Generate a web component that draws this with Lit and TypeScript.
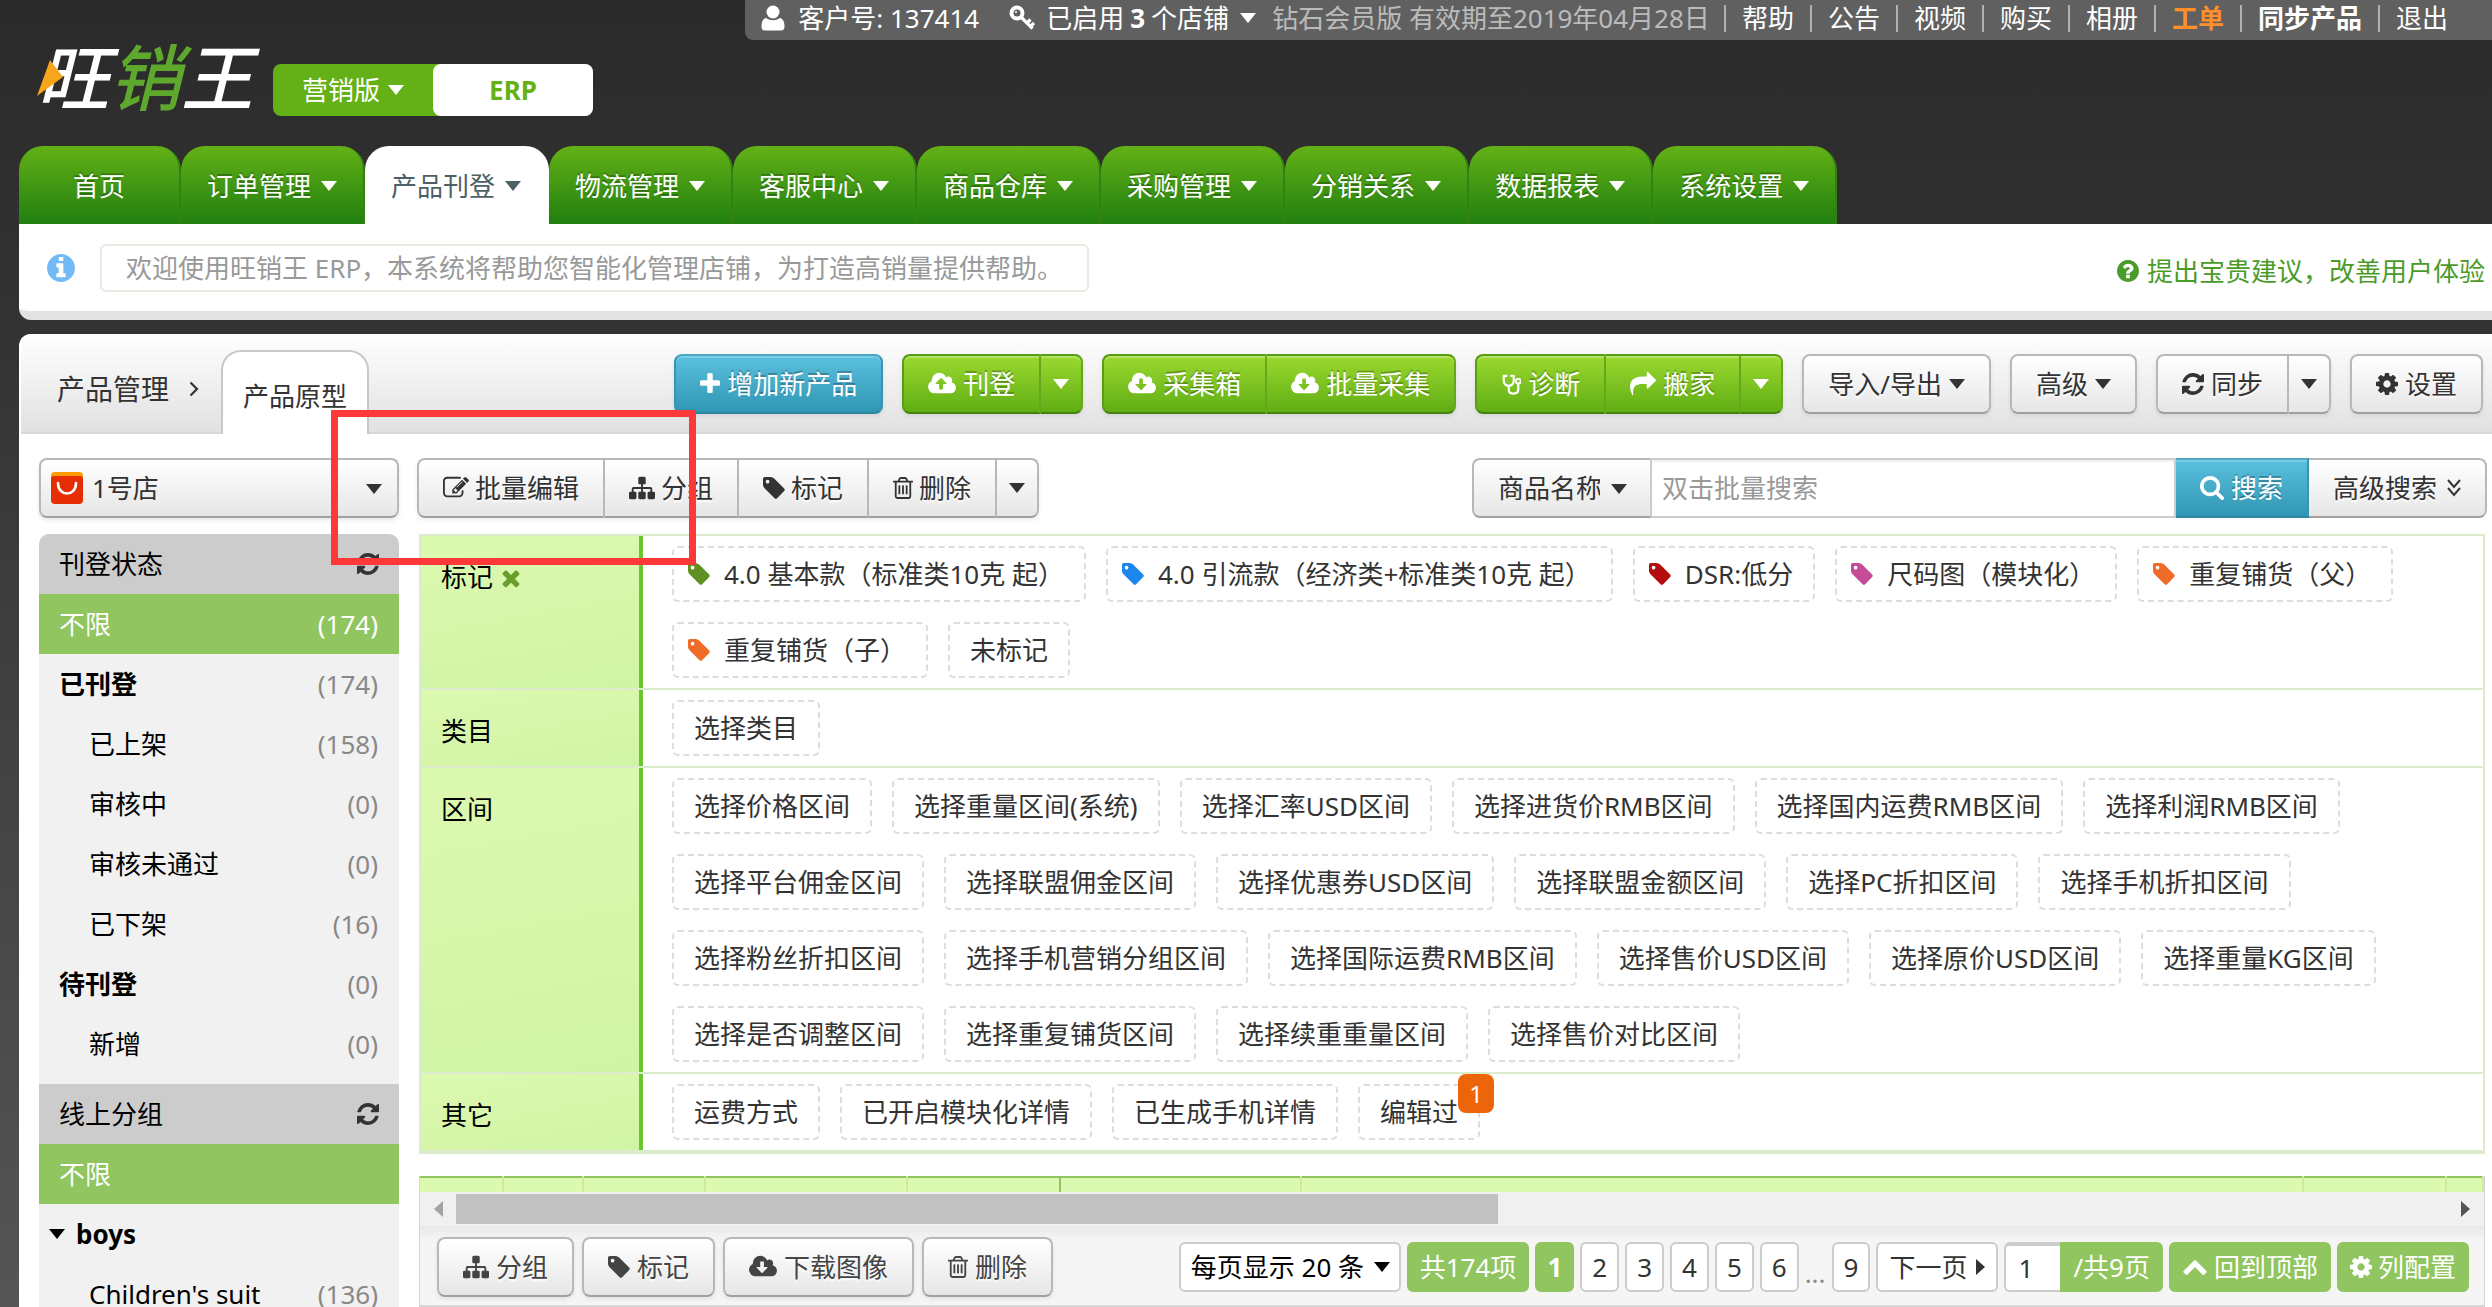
import { LitElement, html, css, svg, nothing, type TemplateResult, type SVGTemplateResult } from "lit";
import { customElement } from "lit/decorators.js";
import { classMap } from "lit/directives/class-map.js";
import { styleMap } from "lit/directives/style-map.js";

type Glyph = { box: string; w: number; h: number; body: SVGTemplateResult };

const CLOUD =
  "m640 288q0 159-112.5 271.5t-271.5 112.5h-1088q-185 0-316.5-131.5t-131.5-316.5q0-130 70-240t188-165q-2-30-2-43 0-212 150-362t362-150q156 0 285.5 87t188.5 231q71-62 166-62 106 0 181 75t75 181q0 76-41 138 130 31 213.5 135.5t83.5 238.5z";

const GLYPHS: Record<string, Glyph> = {
  tag: {
    box: "128 0 1536 1792", w: 22, h: 26,
    body: svg`<path d="M576 448q0-53-37.5-90.5t-90.5-37.5-90.5 37.5-37.5 90.5 37.5 90.5 90.5 37.5 90.5-37.5 37.5-90.5zm1067 576q0 53-37 90l-491 492q-39 37-91 37-53 0-90-37l-715-716q-38-37-64.5-101t-26.5-117v-416q0-52 38-90t90-38h416q53 0 117 26.5t102 64.5l715 714q37 39 37 91z"/>`,
  },
  trash: {
    box: "192 0 1408 1792", w: 20, h: 26,
    body: svg`<path d="M704 736v576q0 14-9 23t-23 9h-64q-14 0-23-9t-9-23v-576q0-14 9-23t23-9h64q14 0 23 9t9 23zm256 0v576q0 14-9 23t-23 9h-64q-14 0-23-9t-9-23v-576q0-14 9-23t23-9h64q14 0 23 9t9 23zm256 0v576q0 14-9 23t-23 9h-64q-14 0-23-9t-9-23v-576q0-14 9-23t23-9h64q14 0 23 9t9 23zm128 724v-948h-896v948q0 22 7 40.5t14.5 27 10.5 8.5h832q3 0 10.5-8.5t14.5-27 7-40.5zm-672-1076h448l-48-117q-7-9-17-11h-317q-10 2-17 11zm928 32v64q0 14-9 23t-23 9h-96v948q0 83-47 143.5t-113 60.5h-832q-66 0-113-58.5t-47-141.5v-952h-96q-14 0-23-9t-9-23v-64q0-14 9-23t23-9h309l70-167q15-37 54-63t79-26h320q40 0 79 26t54 63l70 167h309q14 0 23 9t9 23z"/>`,
  },
  refresh: {
    box: "128 0 1536 1792", w: 22, h: 26,
    body: svg`<path d="M1639 1056q0 5-1 7-64 268-268 434.5t-478 166.5q-146 0-282.5-55t-243.5-157l-129 129q-19 19-45 19t-45-19-19-45v-448q0-26 19-45t45-19h448q26 0 45 19t19 45-19 45l-137 137q71 66 161 102t187 36q134 0 250-65t186-179q11-17 53-117 8-23 30-23h192q13 0 22.5 9.5t9.5 22.5zm25-800v448q0 26-19 45t-45 19h-448q-26 0-45-19t-19-45 19-45l138-138q-148-137-349-137-134 0-250 65t-186 179q-11 17-53 117-8 23-30 23h-199q-13 0-22.5-9.5t-9.5-22.5v-7q65-268 270-434.5t480-166.5q146 0 284 55.5t245 156.5l130-129q19-19 45-19t45 19 19 45z"/>`,
  },
  cog: {
    box: "128 0 1536 1792", w: 22, h: 26,
    body: svg`<path d="M1152 896q0-106-75-181t-181-75-181 75-75 181 75 181 181 75 181-75 75-181zm512-109v222q0 12-8 23t-20 13l-185 28q-19 54-39 91 35 50 107 138 10 12 10 25t-9 23q-27 37-99 108t-94 71q-12 0-26-9l-138-108q-44 23-91 38-16 136-29 186-7 28-36 28h-222q-14 0-24.5-8.5t-11.5-21.5l-28-184q-49-16-90-37l-141 107q-10 9-25 9-14 0-25-11-126-114-165-168-7-10-7-23 0-12 8-23 15-21 51-66.5t54-70.5q-27-50-41-99l-183-27q-13-2-21-12.5t-8-23.5v-222q0-12 8-23t19-13l186-28q14-46 39-92-40-57-107-138-10-12-10-24 0-10 9-23 26-36 98.5-107.5t94.5-71.5q13 0 26 10l138 107q44-23 91-38 16-136 29-186 7-28 36-28h222q14 0 24.5 8.5t11.5 21.5l28 184q49 16 90 37l142-107q9-9 24-9 13 0 25 10 129 119 165 170 7 8 7 22 0 12-8 23-15 21-51 66.5t-54 70.5q26 50 41 98l183 28q13 2 21 12.5t8 23.5z"/>`,
  },
  plus: {
    box: "192 0 1408 1792", w: 20, h: 26,
    body: svg`<path d="M1600 736v192q0 40-28 68t-68 28h-416v416q0 40-28 68t-68 28h-192q-40 0-68-28t-28-68v-416h-416q-40 0-68-28t-28-68v-192q0-40 28-68t68-28h416v-416q0-40 28-68t68-28h192q40 0 68 28t28 68v416h416q40 0 68 28t28 68z"/>`,
  },
  share: {
    box: "0 0 1792 1792", w: 26, h: 26,
    body: svg`<path d="M1792 640q0 26-19 45l-512 512q-19 19-45 19t-45-19-19-45v-256h-224q-98 0-175.5 6t-154 21.5-133 42.5-105.5 69.5-80 101-48.5 138.5-17.5 181q0 55 5 123 0 6 2.5 23.5t2.5 26.5q0 15-8.5 25t-23.5 10q-16 0-28-17-7-9-13-22t-13.5-30-10.5-24q-127-285-127-451 0-199 53-333 162-403 875-403h224v-256q0-26 19-45t45-19 45 19l512 512q19 19 19 45z"/>`,
  },
  search: {
    box: "64 64 1664 1792", w: 24, h: 26,
    body: svg`<path d="M1216 832q0-185-131.5-316.5t-316.5-131.5-316.5 131.5-131.5 316.5 131.5 316.5 316.5 131.5 316.5-131.5 131.5-316.5zm512 832q0 52-38 90t-90 38q-54 0-90-38l-343-342q-179 124-399 124-143 0-273.5-55.5t-225-150-150-225-55.5-273.5 55.5-273.5 150-225 225-150 273.5-55.5 273.5 55.5 225 150 150 225 55.5 273.5q0 220-124 399l343 343q37 37 37 90z"/>`,
  },
  edit: {
    box: "0 0 1792 1792", w: 26, h: 26,
    body: svg`<path d="M888 1184l116-116-152-152-116 116v56h96v96h56zm440-720q-16-16-33 1l-350 350q-17 17-1 33t33-1l350-350q17-17 1-33zm80 594v190q0 119-84.5 203.5t-203.5 84.5h-832q-119 0-203.5-84.5t-84.5-203.5v-832q0-119 84.5-203.5t203.5-84.5h832q63 0 117 25 15 7 18 23 3 17-9 29l-49 49q-14 14-32 8-23-6-45-6h-832q-66 0-113 47t-47 113v832q0 66 47 113t113 47h832q66 0 113-47t47-113v-126q0-13 9-22l64-64q15-15 35-7t20 29zm-96-738l288 288-672 672h-288v-288zm444 132l-92 92-288-288 92-92q28-28 68-28t68 28l152 152q28 28 28 68t-28 68z"/>`,
  },
  sitemap: {
    box: "0 0 1792 1792", w: 26, h: 26,
    body: svg`<path d="M1792 1248v320q0 40-28 68t-68 28h-320q-40 0-68-28t-28-68v-320q0-40 28-68t68-28h96v-192h-512v192h96q40 0 68 28t28 68v320q0 40-28 68t-68 28h-320q-40 0-68-28t-28-68v-320q0-40 28-68t68-28h96v-192h-512v192h96q40 0 68 28t28 68v320q0 40-28 68t-68 28h-320q-40 0-68-28t-28-68v-320q0-40 28-68t68-28h96v-192q0-52 38-90t90-38h512v-192h-96q-40 0-68-28t-28-68v-320q0-40 28-68t68-28h320q40 0 68 28t28 68v320q0 40-28 68t-68 28h-96v192h512q52 0 90 38t38 90v192h96q40 0 68 28t28 68z"/>`,
  },
  upload: {
    box: "0 0 1920 1792", w: 28, h: 26,
    body: svg`<path d="M1280 864q0-14-9-23l-352-352q-9-9-23-9t-23 9l-351 351q-10 12-10 24 0 14 9 23t23 9h224v352q0 13 9.5 22.5t22.5 9.5h192q13 0 22.5-9.5t9.5-22.5v-352h224q13 0 22.5-9.5t9.5-22.5z${CLOUD}"/>`,
  },
  download: {
    box: "0 0 1920 1792", w: 28, h: 26,
    body: svg`<path d="M1280 928q0-14-9-23t-23-9h-224v-352q0-13-9.5-22.5t-22.5-9.5h-192q-13 0-22.5 9.5t-9.5 22.5v352h-224q-13 0-22.5 9.5t-9.5 22.5q0 14 9 23l352 352q9 9 23 9t23-9l351-351q10-12 10-24zm0-64${CLOUD}"/>`,
  },
  steth: {
    box: "0 0 22 26", w: 20, h: 26,
    body: svg`<path d="M3 4H6M11 4H14M3 4V9C3 13 5.500 15 8.500 15S14 13 14 9V4M8.500 15V19C8.500 22 10.500 23.500 13.500 23.500S19 22 19 19V12.500" fill="none" stroke="currentColor" stroke-width="2.400" stroke-linecap="round" stroke-linejoin="round"/><circle cx="19" cy="10" r="2.600" fill="none" stroke="currentColor" stroke-width="2"/>`,
  },
  times: {
    box: "192 0 1408 1792", w: 20, h: 26,
    body: svg`<path d="M1490 1322q0 40-28 68l-136 136q-28 28-68 28t-68-28l-294-294-294 294q-28 28-68 28t-68-28l-136-136q-28-28-28-68t28-68l294-294-294-294q-28-28-28-68t28-68l136-136q28-28 68-28t68 28l294 294 294-294q28-28 68-28t68 28l136 136q28 28 28 68t-28 68l-294 294 294 294q28 28 28 68z"/>`,
  },
  up: {
    box: "0 64 1792 1792", w: 26, h: 26,
    body: svg`<path d="M1683 1331l-166 165q-19 19-45 19t-45-19l-531-531-531 531q-19 19-45 19t-45-19l-166-165q-19-19-19-45.500t19-45.500l742-741q19-19 45-19t45 19l742 741q19 19 19 45.500t-19 45.500z"/>`,
  },
  question: {
    box: "128 128 1536 1536", w: 22, h: 22,
    body: svg`<path d="M1024 1376v-192q0-14-9-23t-23-9h-192q-14 0-23 9t-9 23v192q0 14 9 23t23 9h192q14 0 23-9t9-23zm256-672q0-88-55.500-163t-138.500-116-170-41q-243 0-371 213-15 24 8 42l132 100q7 6 19 6 16 0 25-12 53-68 86-92 34-24 86-24 48 0 85.500 26t37.500 59q0 38-20 61t-68 45q-63 28-115.500 86.500t-52.500 125.500v36q0 14 9 23t23 9h192q14 0 23-9t9-23q0-19 21.500-49.500t54.500-49.500q32-18 49-28.500t46-35 44.500-48 28-60.500 12.500-81zm384 192q0 209-103 385.500t-279.500 279.500-385.500 103-385.500-103-279.500-279.500-103-385.500 103-385.500 279.500-279.500 385.500-103 385.500 103 279.500 279.500 103 385.500z"/>`,
  },
  info: {
    box: "128 128 1536 1536", w: 28, h: 28,
    body: svg`<path d="M1152 1376v-160q0-14-9-23t-23-9h-96v-512q0-14-9-23t-23-9h-320q-14 0-23 9t-9 23v160q0 14 9 23t23 9h96v320h-96q-14 0-23 9t-9 23v160q0 14 9 23t23 9h448q14 0 23-9t9-23zm-128-896v-160q0-14-9-23t-23-9h-192q-14 0-23 9t-9 23v160q0 14 9 23t23 9h192q14 0 23-9t9-23zm640 416q0 209-103 385.500t-279.500 279.500-385.500 103-385.500-103-279.500-279.500-103-385.500 103-385.500 279.500-279.500 385.500-103 385.500 103 279.500 279.500 103 385.500z"/>`,
  },
  user: {
    box: "0 0 24 26", w: 24, h: 26,
    body: svg`<circle cx="12" cy="7" r="6.500"/><path d="M5 13Q12 17.500 19 13C22 13.500 23.500 17 23.500 21.500Q23.500 25.500 20 25.500H4Q.5 25.500.5 21.500C.5 17 2 13.500 5 13Z"/>`,
  },
  key: {
    box: "0 0 26 26", w: 26, h: 26,
    body: svg`<g fill="none" stroke="currentColor"><circle cx="8" cy="8" r="5.500" stroke-width="4"/><path d="M12 12L23.500 23.500M18 18L21.500 14.500M21.500 21.500L25 18" stroke-width="3.200"/></g><circle cx="7" cy="7" r="1"/>`,
  },
  caret: { box: "0 0 16 10", w: 16, h: 10, body: svg`<path d="M0 0H16L8 10Z"/>` },
  caretSide: { box: "0 0 9 16", w: 9, h: 16, body: svg`<path d="M0 0V16L9 8Z"/>` },
  caretBack: { box: "0 0 9 16", w: 9, h: 16, body: svg`<path d="M9 0V16L0 8Z"/>` },
  angle: {
    box: "0 0 10 16", w: 10, h: 16,
    body: svg`<path d="M1.500 1.500L8 8L1.500 14.500" fill="none" stroke="currentColor" stroke-width="2.200"/>`,
  },
  angles: {
    box: "0 0 14 18", w: 14, h: 18,
    body: svg`<path d="M1 1L7 8L13 1M1 9L7 16L13 9" fill="none" stroke="currentColor" stroke-width="2"/>`,
  },
  arrowhead: { box: "0 0 26 36", w: 26, h: 36, body: svg`<path d="M13 0L26 17L0 36Z"/>` },
  shop: {
    box: "0 0 32 32", w: 32, h: 32,
    body: svg`<rect width="32" height="24" rx="4" fill="#ff9a00"/><path d="M0 7Q0 4 3 4H29Q32 4 32 7V28Q32 32 28 32H4Q0 32 0 28Z" fill="#e62e04"/><path d="M7 11C7 25 25 25 25 11" fill="none" stroke="#fff" stroke-width="2.600" stroke-linecap="round"/>`,
  },
};

const icon = (name: string, color?: string): TemplateResult => {
  const g = GLYPHS[name];
  return html`<svg class="icon" viewBox=${g.box} width=${g.w} height=${g.h} fill="currentColor" aria-hidden="true"
    style=${color ? styleMap({ color }) : nothing}>${g.body}</svg>`;
};

type Item = { icon?: string; text?: string; tail?: string; label?: string };

const TOP_LINKS = ["帮助", "公告", "视频", "购买", "相册", "工单", "同步产品", "退出"];
const NAV = ["首页", "订单管理", "产品刊登", "物流管理", "客服中心", "商品仓库", "采购管理", "分销关系", "数据报表", "系统设置"];

const ACTIONS: { tone: string; items: Item[] }[] = [
  { tone: "blue", items: [{ icon: "plus", text: "增加新产品" }] },
  { tone: "green", items: [{ icon: "upload", text: "刊登" }, { tail: "caret", label: "更多刊登操作" }] },
  { tone: "green", items: [{ icon: "download", text: "采集箱" }, { icon: "download", text: "批量采集" }] },
  { tone: "green", items: [{ icon: "steth", text: "诊断" }, { icon: "share", text: "搬家" }, { tail: "caret", label: "更多搬家操作" }] },
  { tone: "plain", items: [{ text: "导入/导出", tail: "caret" }] },
  { tone: "plain", items: [{ text: "高级", tail: "caret" }] },
  { tone: "plain", items: [{ icon: "refresh", text: "同步" }, { tail: "caret", label: "更多同步操作" }] },
  { tone: "plain", items: [{ icon: "cog", text: "设置" }] },
];

const BATCH: Item[] = [
  { icon: "edit", text: "批量编辑" },
  { icon: "sitemap", text: "分组" },
  { icon: "tag", text: "标记" },
  { icon: "trash", text: "删除" },
  { tail: "caret", label: "更多批量操作" },
];

const FOOT: Item[] = [
  { icon: "sitemap", text: "分组" },
  { icon: "tag", text: "标记" },
  { icon: "download", text: "下载图像" },
  { icon: "trash", text: "删除" },
];

const STATES: { text: string; count: string; kind: string }[] = [
  { text: "不限", count: "(174)", kind: "on" },
  { text: "已刊登", count: "(174)", kind: "strong" },
  { text: "已上架", count: "(158)", kind: "child" },
  { text: "审核中", count: "(0)", kind: "child" },
  { text: "审核未通过", count: "(0)", kind: "child" },
  { text: "已下架", count: "(16)", kind: "child" },
  { text: "待刊登", count: "(0)", kind: "strong" },
  { text: "新增", count: "(0)", kind: "child" },
];

const FILTERS: { name: string; clear?: boolean; chips: { text: string; color?: string; badge?: string }[] }[] = [
  {
    name: "标记", clear: true,
    chips: [
      { text: "4.0 基本款（标准类10克 起）", color: "#5f9022" },
      { text: "4.0 引流款（经济类+标准类10克 起）", color: "#1c86ee" },
      { text: "DSR:低分", color: "#b40d0d" },
      { text: "尺码图（模块化）", color: "#c54d98" },
      { text: "重复铺货（父）", color: "#ee6b28" },
      { text: "重复铺货（子）", color: "#ee6b28" },
      { text: "未标记" },
    ],
  },
  { name: "类目", chips: [{ text: "选择类目" }] },
  {
    name: "区间",
    chips: [
      "选择价格区间", "选择重量区间(系统)", "选择汇率USD区间", "选择进货价RMB区间", "选择国内运费RMB区间", "选择利润RMB区间",
      "选择平台佣金区间", "选择联盟佣金区间", "选择优惠券USD区间", "选择联盟金额区间", "选择PC折扣区间", "选择手机折扣区间",
      "选择粉丝折扣区间", "选择手机营销分组区间", "选择国际运费RMB区间", "选择售价USD区间", "选择原价USD区间", "选择重量KG区间",
      "选择是否调整区间", "选择重复铺货区间", "选择续重重量区间", "选择售价对比区间",
    ].map((text) => ({ text })),
  },
  {
    name: "其它",
    chips: [{ text: "运费方式" }, { text: "已开启模块化详情" }, { text: "已生成手机详情" }, { text: "编辑过", badge: "1" }],
  },
];

/* Column shares of the product table, in thousandths of its width */
const COLUMNS = [40, 39, 59, 98, 74, 117, 486, 69, 18];

@customElement("app-root")
export class AppRoot extends LitElement {
  static styles = css`
    :host {
      display: flex;
      flex-direction: column;
      height: 100vh;
      overflow: hidden;
      position: relative;
      background: linear-gradient(#2a2a2a, #333 25%, #3f3f3f 50%, #555);
      color: #333;
      font: 26px/32px "Noto Sans", "Noto Sans CJK SC", sans-serif;
    }
    *, *::before { box-sizing: border-box; }
    button, input, select { font: inherit; color: inherit; margin: 0; }
    button { cursor: pointer; white-space: nowrap; }
    a { color: inherit; text-decoration: none; }
    .icon { display: block; flex: none; }

    .head { display: grid; grid-template-columns: auto 1fr; grid-template-rows: 40px 106px 78px; padding-left: 19px; }
    .top { grid-column: 2; justify-self: end; display: flex; align-items: center; height: 40px; padding: 0 44px 4px 16px; background: #606060; border-radius: 0 0 0 8px; color: #fff; white-space: nowrap; }
    .account { display: flex; align-items: center; gap: 13px; margin-right: 30px; }
    .shops { display: flex; align-items: center; gap: 11px; margin-right: 16px; padding: 0; border: 0; background: none; color: #fff; }
    .shops b { margin: 0 6px; }
    .plan { color: #bbb; margin-right: 14px; }
    .links { display: flex; margin: 0; padding: 0; list-style: none; }
    .links li { display: flex; align-items: center; }
    .links li::before { content: ""; width: 2px; height: 27px; margin-right: 16px; background: #b0b0b0; }
    .links li + li::before { margin-left: 16px; }
    .hot { color: #ff8f2a; font-weight: 700; }
    .strong { font-weight: 700; }

    .brand { grid-column: 1 / -1; display: flex; align-items: flex-start; height: 106px; }
    .logo { position: relative; display: flex; width: 254px; padding-left: 18px; color: #fff; font: italic 500 72px/68px "Noto Sans CJK SC", sans-serif; white-space: nowrap; }
    .logo em { color: #5fa82e; }
    .logo .icon { position: absolute; left: 18px; top: 20px; color: #f9a51a; }
    .mode { display: flex; height: 52px; margin-top: 24px; border-radius: 8px; background: #63b116; }
    .mode button { display: flex; align-items: center; justify-content: center; gap: 8px; width: 160px; padding: 0; border: 0; border-radius: 8px; background: none; color: #fff; }
    .mode .on { background: #fff; color: #63b116; font-weight: 700; }

    .nav { grid-column: 1 / -1; display: flex; }
    .nav a { display: flex; align-items: center; justify-content: center; gap: 10px; padding: 2px 26px 0; border-radius: 24px 24px 0 0; border-right: 2px solid #358012; background: linear-gradient(#63b116, #217f10); color: #fff; text-shadow: 0 -2px 0 rgba(0, 0, 0, 0.25); }
    .nav a:first-child { padding: 2px 54px 0; }
    .nav .on { background: #fff; color: #4c6066; border-color: #fff; text-shadow: none; }

    .notice { flex: none; display: flex; align-items: center; height: 96px; margin-left: 19px; padding: 0 7px 0 28px; background: #fff; border-bottom: 9px solid #e3e3e3; border-bottom-left-radius: 12px; }
    .notice > .icon { color: #73b9f4; }
    .message { margin-left: 25px; padding: 6px 24px; height: 48px; border: 2px solid #ebe8e0; border-radius: 6px; color: #999; }
    .advice { display: flex; align-items: center; gap: 8px; margin-left: auto; padding-top: 6px; color: #4b9b2a; }

    .panel { flex: 1; min-height: 0; display: flex; flex-direction: column; margin: 14px 0 0 19px; border-top-left-radius: 12px; background: #fff; overflow: hidden; }
    .bar { flex: none; display: flex; align-items: center; height: 100px; margin-left: 2px; padding: 2px 9px 0 36px; background: linear-gradient(#fff, #e1e1e1); border-bottom: 2px solid #d8d8d8; }
    .crumb { display: flex; align-items: center; gap: 20px; margin: 10px 22px 0 0; font-size: 28px; }
    .tab { align-self: flex-end; height: 84px; margin-bottom: -2px; padding: 28px 20px 0; border: 2px solid #c8c8c8; border-bottom: 0; border-radius: 20px 20px 0 0; background: #fff; }
    .actions { display: flex; gap: 19px; margin-left: auto; }

    .group { display: flex; border-radius: 8px; box-shadow: 0 2px 4px rgba(0, 0, 0, 0.08); }
    .btn { display: flex; align-items: center; justify-content: center; gap: 7px; height: 60px; padding: 0 24px; border: 2px solid #b8b8b8; border-bottom-color: #a0a0a0; background: linear-gradient(#fff, #e6e6e6); text-shadow: 0 2px 2px #fff; }
    .btn:first-child { border-top-left-radius: 8px; border-bottom-left-radius: 8px; }
    .btn:last-child { border-top-right-radius: 8px; border-bottom-right-radius: 8px; }
    .btn + .btn { border-left: 0; }
    .slim { padding: 0 12px; }
    .blue .btn, .find { border-color: #4ba8c4 #3795b2 #2f86a1; background: linear-gradient(#5bc0de, #2f96b4); box-shadow: inset 0 2px 0 rgba(255, 255, 255, 0.2); color: #fff; text-shadow: 0 -2px 0 rgba(0, 0, 0, 0.25); }
    .green .btn { border-color: #589d14 #65a81c #46800e #589d14; background: linear-gradient(#9bd82f, #60ae14); box-shadow: inset 0 2px 0 rgba(255, 255, 255, 0.25); color: #fff; text-shadow: 0 -2px 0 rgba(0, 0, 0, 0.25); }

    .body { flex: 1; min-height: 0; display: flex; gap: 18px; padding: 24px 5px 0 20px; }
    .side { flex: none; width: 360px; }
    .pick { position: relative; display: flex; }
    .pick select { width: 100%; appearance: none; cursor: pointer; }
    .pick > .icon { position: absolute; right: 17px; top: 26px; pointer-events: none; }
    .store select { height: 60px; padding: 0 40px 0 51px; border: 2px solid #b8b8b8; border-bottom-color: #a0a0a0; border-radius: 8px; background: linear-gradient(#fff, #e6e6e6); box-shadow: 0 2px 4px rgba(0, 0, 0, 0.1); }
    .store > .icon:first-child { left: 12px; top: 14px; right: auto; }

    .list { margin-top: 16px; background: #f1f1f1; color: #000; border-radius: 10px 10px 0 0; overflow: hidden; }
    .list h2 { display: flex; align-items: center; justify-content: space-between; height: 60px; margin: 0; padding: 0 20px; background: #ccc; font-size: 26px; font-weight: 400; }
    .list h2 button { display: flex; padding: 0; border: 0; background: none; color: #333; }
    .list ul { margin: 0; padding: 0 0 10px; list-style: none; }
    .list a { display: flex; align-items: center; justify-content: space-between; height: 60px; padding: 0 21px 0 20px; }
    .list .child { padding-left: 50px; }
    .list .on { background: #91c55f; color: #fff; }
    .list .open { justify-content: flex-start; gap: 11px; padding-left: 10px; }
    .count { color: #888; font-weight: 400; }
    .on .count { color: #fff; }

    .main { flex: 1; min-width: 0; display: flex; flex-direction: column; }
    .tools { display: flex; justify-content: space-between; height: 60px; }
    .tools .group .btn { gap: 6px; }
    .query { flex: 0 1 1015px; display: flex; }
    .field select { height: 60px; padding: 0 50px 0 24px; border: 2px solid #b8b8b8; border-bottom-color: #a0a0a0; border-right-color: #ccc; border-radius: 8px 0 0 8px; background: linear-gradient(#fff, #e6e6e6); }
    .field { flex: none; width: 180px; }
    .field > .icon { right: 25px; }
    .words { flex: 1; min-width: 0; height: 60px; padding: 0 10px; border: 2px solid #ccc; border-left: 0; background: #fff; outline: 0; box-shadow: inset 0 2px 2px rgba(0, 0, 0, 0.06); }
    .words::placeholder { color: #999; opacity: 1; }
    .query .find { border-left: 0; }
    .query .more { gap: 10px; }

    .filter { margin: 16px 2px 22px; border: 2px solid #dcebcb; border-bottom-width: 4px; }
    .row { display: flex; }
    .row + .row { border-top: 2px solid #dcebcb; }
    .name { flex: none; display: flex; align-items: flex-start; gap: 8px; width: 222px; padding: 25px 20px 0; border-right: 4px solid #6cc42f; background: linear-gradient(170deg, #dcf9b1, #d1f4a4); color: #000; }
    .name button { display: flex; margin-top: 4px; padding: 0; border: 0; background: none; color: #6a9f2c; }
    .chips { display: flex; flex-wrap: wrap; gap: 20px; padding: 10px 29px; }
    .chip { position: relative; display: flex; align-items: center; gap: 14px; height: 56px; padding: 0 20px; border: 2px dashed #ddd; border-radius: 6px; background: none; }
    .chip.tagged { padding-left: 14px; }
    .badge { position: absolute; right: -16px; top: -12px; width: 36px; height: 39px; border-radius: 8px; background: #ed650b; color: #fff; font-size: 24px; line-height: 39px; text-align: center; }

    .grid { margin: 0 2px; border: 1px solid #d4d4d4; border-top: 0; }
    .sheet { width: 100%; border-collapse: collapse; table-layout: fixed; border-top: 2px solid #91c55f; }
    .sheet th { height: 15px; padding: 0; background: #dcf9b1; border-right: 2px solid #cfeaa2; }
    .sheet th.pin { border-color: #91c55f; }
    .scroll { display: flex; align-items: center; gap: 13px; height: 34px; padding: 0 14px; background: #f0f0f0; color: #555; }
    .scroll .icon:first-child { color: #a3a3a3; }
    .track { flex: 1; height: 30px; }
    .thumb { height: 30px; background: #c1c1c1; }
    .foot { display: flex; align-items: flex-start; justify-content: space-between; padding: 11px 15px 8px 17px; background: linear-gradient(#e8e8e8, #f5f5f5 14px); border-bottom: 2px solid #d8d8d8; white-space: nowrap; }
    .batch { display: flex; gap: 8px; color: #444; }
    .pages { display: flex; gap: 6px; margin-top: 5px; }
    .page { display: flex; align-items: center; justify-content: center; gap: 6px; height: 50px; padding: 0 11px; border: 2px solid #ccc; border-radius: 6px; background: #fff; }
    .num { padding: 0 10px; }
    .next { gap: 9px; }
    .solid { border-color: #91c55f; background: #91c55f; color: #fff; }
    .size select { height: 50px; width: 222px; padding: 0 10px; border: 2px solid #ccc; border-radius: 6px; background: #fff; color: #000; }
    .size > .icon { right: 11px; top: 20px; color: #000; }
    .dots { align-self: flex-end; color: #888; padding: 0 0 3px; }
    .jump { display: flex; }
    .jump input { width: 56px; height: 50px; padding: 0 12px; border: 2px solid #ccc; border-top-width: 4px; border-right: 0; border-radius: 6px 0 0 6px; background: #fff; outline: 0; }
    .jump .page { border-radius: 0 6px 6px 0; }

    .mark { position: absolute; left: 331px; top: 410px; width: 365px; height: 155px; border: 7px solid #fd3838; pointer-events: none; }
  `;

  private button(item: Item) {
    return html`<button type="button" class=${classMap({ btn: true, slim: !item.text })} aria-label=${item.label ?? nothing}>
      ${item.icon ? icon(item.icon) : nothing}${item.text ? html`<span>${item.text}</span>` : nothing}${item.tail ? icon(item.tail) : nothing}
    </button>`;
  }

  private header() {
    return html`<header class="head">
      <div class="top">
        <span class="account">${icon("user")}<span>客户号: 137414</span></span>
        <button type="button" class="shops">${icon("key")}<span>已启用<b>3</b>个店铺</span>${icon("caret")}</button>
        <span class="plan">钻石会员版 有效期至2019年04月28日</span>
        <ul class="links">
          ${TOP_LINKS.map((t) => html`<li><a href="#" class=${classMap({ hot: t === "工单", strong: t === "同步产品" })}>${t}</a></li>`)}
        </ul>
      </div>
      <div class="brand">
        <a class="logo" href="#"><span>旺</span><em>销</em><span>王</span>${icon("arrowhead")}</a>
        <div class="mode">
          <button type="button">营销版${icon("caret")}</button>
          <button type="button" class="on">ERP</button>
        </div>
      </div>
      <nav class="nav">
        ${NAV.map((t, i) => html`<a href="#" class=${classMap({ on: t === "产品刊登" })}>${t}${i ? icon("caret") : nothing}</a>`)}
      </nav>
    </header>`;
  }

  private side() {
    return html`<aside class="side">
      <div class="pick store">
        ${icon("shop")}
        <select aria-label="店铺"><option>1号店</option></select>
        ${icon("caret")}
      </div>
      <div class="list">
        <h2>刊登状态<button type="button" aria-label="刷新刊登状态">${icon("refresh")}</button></h2>
        <ul>
          ${STATES.map((s) => html`<li><a href="#" class=${s.kind}>${s.text}<span class="count">${s.count}</span></a></li>`)}
        </ul>
        <h2>线上分组<button type="button" aria-label="刷新线上分组">${icon("refresh")}</button></h2>
        <ul>
          <li><a href="#" class="on">不限</a></li>
          <li><a href="#" class="strong open">${icon("caret")}boys</a></li>
          <li><a href="#" class="child">Children's suit<span class="count">(136)</span></a></li>
        </ul>
      </div>
    </aside>`;
  }

  private filters() {
    return html`<section class="filter">
      ${FILTERS.map((f) => html`<div class="row">
        <div class="name">${f.name}${f.clear ? html`<button type="button" aria-label="清除标记">${icon("times")}</button>` : nothing}</div>
        <div class="chips">
          ${f.chips.map((c) => html`<button type="button" class=${classMap({ chip: true, tagged: !!c.color })}>${c.color ? icon("tag", c.color) : nothing}<span>${c.text}</span>${c.badge ? html`<span class="badge">${c.badge}</span>` : nothing}</button>`)}
        </div>
      </div>`)}
    </section>`;
  }

  private grid() {
    return html`<section class="grid">
      <table class="sheet">
        <thead><tr>${COLUMNS.map((w, i) => html`<th class=${classMap({ pin: i === 4 })} style=${styleMap({ width: `${w / 10}%` })}></th>`)}</tr></thead>
      </table>
      <div class="scroll">
        ${icon("caretBack")}
        <div class="track"><div class="thumb" style=${styleMap({ width: `${(9 / 17.2) * 100}%` })}></div></div>
        ${icon("caretSide")}
      </div>
      <div class="foot">
        <div class="batch">${FOOT.map((b) => html`<div class="group">${this.button(b)}</div>`)}</div>
        <div class="pages">
          <div class="pick size"><select aria-label="每页显示"><option>每页显示 20 条</option></select>${icon("caret")}</div>
          <span class="page solid">共174项</span>
          <button type="button" class="page num solid strong">1</button>
          ${[2, 3, 4, 5, 6].map((n) => html`<button type="button" class="page num">${n}</button>`)}
          <span class="dots">...</span>
          <button type="button" class="page num">9</button>
          <button type="button" class="page next">下一页${icon("caretSide")}</button>
          <div class="jump"><input type="text" aria-label="页码" .value=${"1"} /><button type="button" class="page solid">/共9页</button></div>
          <button type="button" class="page solid">${icon("up")}回到顶部</button>
          <button type="button" class="page solid">${icon("cog")}列配置</button>
        </div>
      </div>
    </section>`;
  }

  render() {
    return html`
      ${this.header()}
      <div class="notice">
        ${icon("info")}
        <div class="message">欢迎使用旺销王 ERP，本系统将帮助您智能化管理店铺，为打造高销量提供帮助。</div>
        <a class="advice" href="#">${icon("question")}提出宝贵建议，改善用户体验</a>
      </div>
      <main class="panel">
        <div class="bar">
          <a class="crumb" href="#">产品管理${icon("angle")}</a>
          <a class="tab" href="#">产品原型</a>
          <div class="actions">
            ${ACTIONS.map((g) => html`<div class="group ${g.tone}">${g.items.map((b) => this.button(b))}</div>`)}
          </div>
        </div>
        <div class="body">
          ${this.side()}
          <div class="main">
            <div class="tools">
              <div class="group">${BATCH.map((b) => this.button(b))}</div>
              <div class="query">
                <div class="pick field"><select aria-label="搜索字段"><option>商品名称</option></select>${icon("caret")}</div>
                <input class="words" type="text" aria-label="搜索内容" placeholder="双击批量搜索" />
                <button type="button" class="btn find">${icon("search")}<span>搜索</span></button>
                <button type="button" class="btn more">高级搜索${icon("angles")}</button>
              </div>
            </div>
            ${this.filters()}
            ${this.grid()}
          </div>
        </div>
      </main>
      <div class="mark"></div>
    `;
  }
}
